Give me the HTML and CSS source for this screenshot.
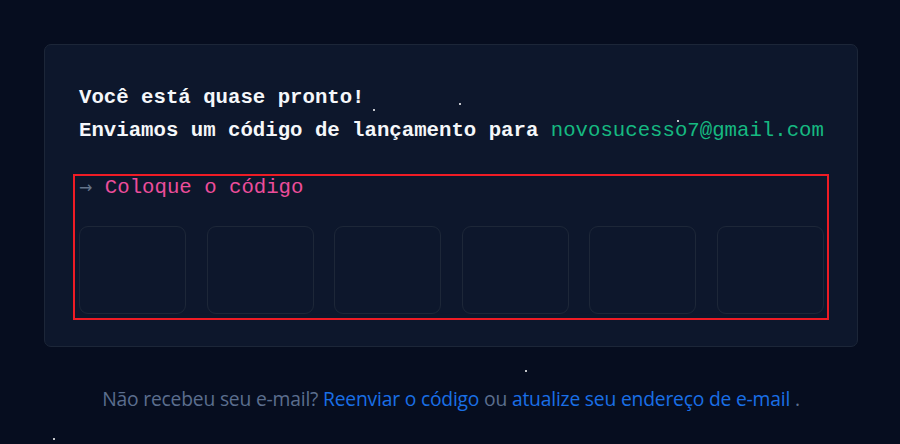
FILE: index.html
```html
<!DOCTYPE html>
<html lang="pt">
<head>
<meta charset="utf-8">
<link rel="stylesheet" href="styles.css">
</head>
<body>
<div class="stars">
  <span class="star" style="left:373px;top:109px"></span>
  <span class="star" style="left:459px;top:103px"></span>
  <span class="star" style="left:677px;top:120px"></span>
  <span class="star" style="left:525px;top:370px"></span>
  <span class="star" style="left:53px;top:438px"></span>
</div>
<main class="page">
  <section class="card">
    <h1 class="title">Você está quase pronto!<br>Enviamos um código de lançamento para <span class="email">novosucesso7@gmail.com</span></h1>
    <div class="code-area">
      <div class="prompt"><span class="arrow">→</span> Coloque o código</div>
      <div class="boxes">
        <div class="box"></div>
        <div class="box"></div>
        <div class="box"></div>
        <div class="box"></div>
        <div class="box"></div>
        <div class="box"></div>
      </div>
    </div>
  </section>
  <p class="footer">Não recebeu seu e-mail? <a class="link">Reenviar o código</a> ou <a class="link">atualize seu endereço de e-mail</a> .</p>
</main>
</body>
</html>
```
FILE: styles.css
```css
html, body {
  margin: 0;
  padding: 0;
  height: 100%;
}
body {
  background: #060d1f;
  overflow: hidden;
  position: relative;
}
.stars .star {
  position: absolute;
  width: 2px;
  height: 2px;
  background: #ffffff;
  border-radius: 1px;
}
.page {
  padding: 44px 42px 0 44px;
}
.card {
  box-sizing: border-box;
  width: 814px;
  height: 303px;
  background: #0d172c;
  border: 1px solid #1c2638;
  border-radius: 7px;
  padding: 36px 0 0 28px;
}
.title {
  margin: 0 0 0 6px;
  font-family: "Liberation Mono", "DejaVu Sans Mono", monospace;
  font-size: 20.7px;
  line-height: 33px;
  font-weight: 700;
  color: #f5f7fa;
}
.email {
  font-weight: 400;
  color: #16b981;
}
.code-area {
  margin-top: 27px;
  width: 756px;
  height: 146px;
  border: 2px solid #ee1c25;
  padding: 0 0 0 4px;
  box-sizing: border-box;
}
.prompt {
  font-family: "Liberation Mono", "DejaVu Sans Mono", monospace;
  font-size: 20.7px;
  line-height: 22px;
  color: #ec4d9b;
  margin-top: 1px;
}
.arrow {
  color: #64748b;
  font-family: "DejaVu Sans", sans-serif;
  font-size: 16px;
}
.boxes {
  display: flex;
  gap: 20.6px;
  margin-top: 27px;
}
.box {
  box-sizing: border-box;
  width: 107px;
  height: 88px;
  border: 1px solid #1d2738;
  border-radius: 9px;
}
.footer {
  margin: 38px 0 0 0;
  width: 814px;
  text-align: center;
  font-family: "Open Sans", "Noto Sans", sans-serif;
  font-size: 19.3px;
  color: #5b6e8e;
  letter-spacing: -0.2px;
}
.link {
  color: #1a6fe6;
}
```
